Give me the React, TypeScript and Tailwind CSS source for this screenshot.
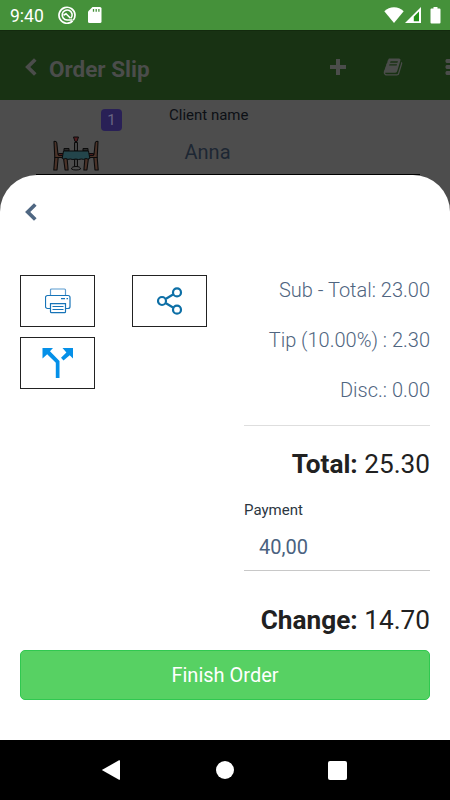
import type { ReactNode } from 'react'

interface AmountRowProps {
  label: string
  value: string
}

const ORDER = {
  table: 1,
  client: 'Anna',
  subTotal: '23.00',
  tip: '2.30',
  discount: '0.00',
  total: '25.30',
  payment: '40,00',
  change: '14.70',
}

function ChevronIcon({ className }: { className: string }) {
  return (
    <svg viewBox="0 0 12 18" className={`h-[18px] w-3 ${className}`} aria-hidden="true">
      <path d="M10.3 1.500 2.700 9l7.600 7.500" fill="none" stroke="currentColor" strokeWidth="3.700" />
    </svg>
  )
}

function BookIcon() {
  return (
    <svg viewBox="0 0 1792 1792" fill="currentColor" className="mt-[3px] size-5" aria-hidden="true">
      <path d="M1703 478q40 57 18 129l-275 906q-19 64-76.5 107.5t-122.5 43.5h-923q-77 0-148.5-53.5t-99.5-131.5q-24-67-2-127 0-4 3-27t4-37q1-8-3-21.5t-3-19.5q2-11 8-21t16.5-23.5 16.5-23.5q23-38 45-91.5t30-91.5q3-10 .5-30t-.5-28q3-11 17-28t17-23q21-36 42-92t25-90q1-9-2.5-32t.5-28q4-13 22-30.5t22-22.5q19-26 42.5-84.5t27.5-96.5q1-8-3-25.5t-2-26.5q2-8 9-18t18-23 17-21q8-12 16.5-30.5t15-35 16-36 19.5-32 26.5-23.5 36-11.5 47.5 5.5l-1 3q38-9 51-9h761q74 0 114 56t18 130l-274 906q-36 119-71.5 153.5t-128.5 34.5h-869q-27 0-38 15-11 16-1 43 24 70 144 70h923q29 0 56-15.5t35-41.5l300-987q7-22 5-57 38 15 59 43zm-1064 2q-4 13 2 22.5t20 9.5h608q13 0 25.5-9.5t16.5-22.5l21-64q4-13-2-22.5t-20-9.5h-608q-13 0-25.5 9.5t-16.5 22.5zm-83 256q-4 13 2 22.5t20 9.5h608q13 0 25.5-9.5t16.5-22.5l21-64q4-13-2-22.5t-20-9.5h-608q-13 0-25.5 9.5t-16.5 22.5z" />
    </svg>
  )
}

function TableIcon() {
  return (
    <svg viewBox="0 0 46 36" className="h-9 w-[46px]" stroke="#0b0b0b" strokeLinejoin="round" aria-hidden="true">
      <g strokeWidth="1.1" fill="#4b3329">
        <path d="M1 5.500q2.500-.5 2.800 1.500L5 18.500h4.500v3H1.800z" />
        <path d="M1.800 21.500h3.400L4 34H.8z" />
        <path d="M10.500 22h3.600l1 12h-3z" />
        <path d="M45 5.500q-2.500-.5-2.800 1.500L41 18.500h-4.500v3h7.700z" />
        <path d="M44.200 21.500h-3.400L42 34h3.200z" />
        <path d="M35.500 22h-3.600l-1 12h3z" />
      </g>
      <g strokeWidth="1">
        <path d="M5.500 17.500h5v2h-5zM35.500 17.500h5v2h-5z" fill="#4a1b1b" />
        <path d="M21.500 23h3v7.500h-3z" fill="#444" />
        <path d="M18.500 33q0-2.500 4.500-2.500t4.500 2.500q-1.500 1-4.500 1t-4.500-1z" fill="#4d4d4d" />
        <path d="M21.500 6.500h3V15h-3z" fill="#444" />
        <path d="M20.500 1h5L24 5.500h-2z" fill="#541c20" />
        <path d="M11 12.500h5V15h-5zM30 12.500h5V15h-5z" fill="#2b2b2b" />
        <path d="M10.500 15h25l1.300 7.500q-2 1-4 0-2 1.500-4.500.5-3 1-5.500 0-3 1-5.500 0-2.500 1-4.500-.5-2 1-3.600 0z" fill="#23454b" />
      </g>
    </svg>
  )
}

function PrinterIcon() {
  return (
    <svg viewBox="0 0 26 26" className="size-[26px]" fill="none" stroke="#1774b8" strokeWidth="1.2" aria-hidden="true">
      <path d="M5.500 7.500V2a1 1 0 0 1 1-1h13a1 1 0 0 1 1 1v5.500" stroke="#5b9bd0" />
      <path d="M5.500 20.500H2.500a2 2 0 0 1-2-2v-9a2 2 0 0 1 2-2h20.500a2 2 0 0 1 2 2v9a2 2 0 0 1-2 2h-2.500" />
      <path d="M5.500 15.700h15v8a1 1 0 0 1-1 1h-13a1 1 0 0 1-1-1z" />
      <path d="M7.500 18.500h11M7.500 21.500h11M16 10.700h4M21.500 10.700h1.500" />
    </svg>
  )
}

function ShareIcon() {
  return (
    <svg viewBox="0 0 26 28" className="h-7 w-[26px]" fill="none" stroke="#0d6fa6" strokeWidth="2.200" aria-hidden="true">
      <path d="m9 11.700 7-4.200M9 16.300l7 4.200" />
      <circle cx="5" cy="14" r="4" />
      <circle cx="20" cy="5.400" r="4" />
      <circle cx="20" cy="22.700" r="4" />
    </svg>
  )
}

function SplitIcon() {
  return (
    <svg viewBox="0 0 32 32" className="size-8" fill="#0590e8" aria-hidden="true">
      <path d="M.5 1H11L8 4.200l9.500 9.800V31h-3.700V15.700L5.200 7.200.5 11.500z" />
      <path d="M20.500 1h10.500v10.500l-3.300-3.300-6.200 5.300-2.500-2.700 5.400-5.300z" />
    </svg>
  )
}

function ActionButton({ label, children }: { label: string; children: ReactNode }) {
  return (
    <button
      type="button"
      aria-label={label}
      className="flex h-[52px] w-[74.500px] items-center justify-center border border-[#222] pl-0.5"
    >
      {children}
    </button>
  )
}

function AmountRow({ label, value }: AmountRowProps) {
  return (
    <p className="h-[50px] text-right text-[20px] leading-[30px] font-light text-[#4f6580]">
      {label} {value}
    </p>
  )
}

function TotalRow({ label, value }: AmountRowProps) {
  return (
    <p className="text-right text-[26.200px] leading-8 text-[#212121]">
      <span className="font-bold">{label}</span> {value}
    </p>
  )
}

function StatusBar() {
  return (
    <div className="flex h-[30px] shrink-0 items-center bg-[#45913a] text-white">
      <span className="w-[58px] pt-0.5 pl-[10px] text-[17.500px] leading-5">9:40</span>
      <svg viewBox="0 0 18 18" className="size-[18px]" fill="none" stroke="currentColor" aria-hidden="true">
        <path d="M14.700 14.900A8 8 0 1 1 17 9q0 3.300-1.800 5.300" strokeWidth="1.700" />
        <path d="M13 12.200A5 5 0 1 0 9 14h5.500" strokeWidth="1.600" />
        <path d="m5.500 9.300 2.500-1.500 4.500 4.500" strokeWidth="1.600" />
      </svg>
      <svg viewBox="0 0 14 16" className="ml-3 h-4 w-[14px]" aria-hidden="true">
        <path d="M4.500 0H12q1.500 0 1.500 1.500v13Q13.500 16 12 16H1.500Q0 16 0 14.500V4.500z" fill="currentColor" />
        <path d="M5.500 2v2.800M8.200 2v2.800M10.900 2v2.800" stroke="#45913a" strokeWidth="1.300" />
      </svg>
      <div className="ml-auto flex items-center pr-[9.500px]">
        <svg viewBox="0 0 20 16" className="h-4 w-5" fill="currentColor" aria-hidden="true">
          <path d="M.3 4.300Q4.500.3 10 .3t9.700 4L10 16z" />
        </svg>
        <svg viewBox="0 0 17 17" className="ml-px size-[17px]" aria-hidden="true">
          <path d="M0 16 16 0v16z" fill="currentColor" />
          <path d="m8.800 9.800 5.200-5.300v9.700H8.800z" fill="#249018" />
        </svg>
        <svg viewBox="0 0 11 17" className="ml-2 h-[17px] w-[11px]" fill="currentColor" aria-hidden="true">
          <path d="M3.500 0h4v1.500H9.500q1 0 1 1v13q0 1-1 1h-8q-1 0-1-1v-13q0-1 1-1h2z" />
        </svg>
      </div>
    </div>
  )
}

function AppHeader() {
  return (
    <header className="flex h-[70px] shrink-0 items-center overflow-hidden border-t border-[#132a0e] bg-[#183213] pl-[24.500px] text-[#4b4d4b]">
      <ChevronIcon className="mt-0.5" />
      <h1 className="ml-[12.500px] pt-[7px] text-[22.500px] leading-7 font-bold">Order Slip</h1>
      <svg viewBox="0 0 16 16" className="mt-0.5 mr-[37px] ml-auto size-4" fill="currentColor" aria-hidden="true">
        <path d="M6 0h4v6h6v4h-6v6H6v-6H0V6h6z" />
      </svg>
      <BookIcon />
      <svg viewBox="0 0 5 16" className="mt-0.5 ml-[42px] h-4 w-[5px] shrink-0" fill="currentColor" aria-hidden="true">
        <path d="M1.500 0H5v4H1.500l-1-1V1zM1.500 6H5v4H1.500l-1-1V7zM1.500 12H5v4H1.500l-1-1v-2z" />
      </svg>
    </header>
  )
}

function ClientPanel() {
  return (
    <section className="flex h-[74px] shrink-0">
      <div className="relative w-[169px] pt-[36px] pl-[53px]">
        <TableIcon />
        <span className="absolute top-[8.500px] left-[101px] flex h-[22.500px] w-[21px] items-center justify-center rounded bg-[#292056] text-[15px] text-[#686482]">
          {ORDER.table}
        </span>
      </div>
      <div>
        <p className="pt-[5px] text-[15px] leading-5 text-[#0c1015]">Client name</p>
        <p className="mt-[13px] pl-[15.500px] text-[20px] leading-7 text-[#1d2733]">{ORDER.client}</p>
      </div>
    </section>
  )
}

function PaymentSheet() {
  return (
    <main className="flex-1 rounded-t-[37px] bg-white px-5 pt-[27.500px]">
      <button type="button" aria-label="Back" className="ml-[4.500px] block text-[#4f6782]">
        <ChevronIcon className="block" />
      </button>
      <div className="mt-[54.500px] flex justify-between">
        <div className="flex h-[114px] w-[186.500px] flex-wrap content-between justify-between">
          <ActionButton label="Print">
            <PrinterIcon />
          </ActionButton>
          <ActionButton label="Share">
            <ShareIcon />
          </ActionButton>
          <ActionButton label="Split bill">
            <SplitIcon />
          </ActionButton>
        </div>
        <div className="w-[186px]">
          <AmountRow label="Sub - Total:" value={ORDER.subTotal} />
          <AmountRow label="Tip (10.00%) :" value={ORDER.tip} />
          <AmountRow label="Disc.:" value={ORDER.discount} />
          <div className="mb-[22px] border-t border-[#dedede]" />
          <TotalRow label="Total:" value={ORDER.total} />
          <p className="mt-5 text-[15px] leading-5 text-[#2c363f]">Payment</p>
          <p className="mb-[33px] h-[51px] border-b border-[#c8c8c8] pt-3 pl-[15px] text-[20px] leading-[30px] text-[#4a6280]">
            {ORDER.payment}
          </p>
          <TotalRow label="Change:" value={ORDER.change} />
        </div>
      </div>
      <button
        type="button"
        className="mt-[14px] block h-[50px] w-full rounded-[5px] border border-[#30c850] bg-[#57d163] text-[20px] text-white"
      >
        Finish Order
      </button>
    </main>
  )
}

function NavigationBar() {
  return (
    <nav className="flex h-[60px] shrink-0 items-center justify-between bg-black pr-[103px] pl-[101px]">
      <svg viewBox="0 0 20 20" className="size-5" fill="#fff" aria-hidden="true">
        <path d="M.8 10 18 .3q1-.5 1 .5v18.400q0 1-1 .5z" />
      </svg>
      <span className="size-[18px] rounded-full bg-white" />
      <span className="size-[19px] rounded-[2px] bg-white" />
    </nav>
  )
}

export default function App() {
  return (
    <div className="flex h-[800px] w-[450px] flex-col overflow-hidden bg-[#4d4d4d] font-[Roboto,sans-serif]">
      <StatusBar />
      <AppHeader />
      <ClientPanel />
      <div className="mr-[30px] ml-9 h-px shrink-0 bg-black" />
      <PaymentSheet />
      <NavigationBar />
    </div>
  )
}
